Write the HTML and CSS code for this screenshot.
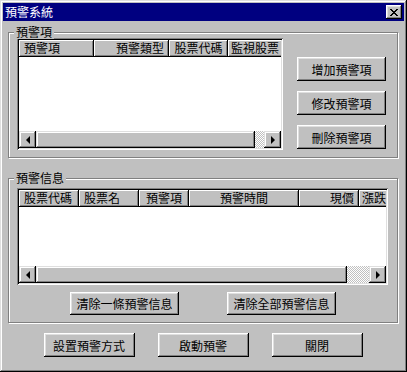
FILE: index.html
```html
<!DOCTYPE html>
<html lang="zh-Hant">
<head>
    <meta charset="UTF-8">
    <title>預警系統</title>
    <link rel="stylesheet" href="styles.css">
</head>
<body>
    <div class="window">
        <div class="titlebar">
            <span class="title">預警系統</span>
            <button class="close">
                <svg width="8" height="7" viewBox="0 0 8 7"><path d="M0 0h2v1h1v1h2V1h1V0h2v1H7v1H6v1H5v1h1v1h1v1h1v1H6V6H5V5H3v1H2v1H0V6h1V5h1V4h1V3H2V2H1V1H0z" fill="#000"/></svg>
            </button>
        </div>

        <div class="client">
            <div class="group group-items">
                <span class="group-title">預警項</span>
                <div class="listview lv-items">
                    <div class="lv-header">
                        <div class="col w75">預警項</div>
                        <div class="col w75 right">預警類型</div>
                        <div class="col w59 center">股票代碼</div>
                        <div class="col rest">監視股票</div>
                    </div>
                    <div class="lv-body"></div>
                    <div class="hscroll">
                        <div class="sb-btn"><span class="arrow-left"></span></div>
                        <div class="sb-thumb thumb-items"></div>
                        <div class="sb-track"></div>
                        <div class="sb-btn"><span class="arrow-right"></span></div>
                    </div>
                </div>
                <div class="side-buttons">
                    <button class="btn btn-side">增加預警項</button>
                    <button class="btn btn-side">修改預警項</button>
                    <button class="btn btn-side">刪除預警項</button>
                </div>
            </div>

            <div class="group group-alerts">
                <span class="group-title">預警信息</span>
                <div class="listview lv-alerts">
                    <div class="lv-header">
                        <div class="col w60">股票代碼</div>
                        <div class="col w60">股票名</div>
                        <div class="col w50 center">預警項</div>
                        <div class="col w110 center">預警時間</div>
                        <div class="col w60 right">現價</div>
                        <div class="col rest">漲跌</div>
                    </div>
                    <div class="lv-body"></div>
                    <div class="hscroll">
                        <div class="sb-btn"><span class="arrow-left"></span></div>
                        <div class="sb-thumb thumb-alerts"></div>
                        <div class="sb-track"></div>
                        <div class="sb-btn"><span class="arrow-right"></span></div>
                    </div>
                </div>
                <div class="alert-buttons">
                    <button class="btn btn-wide">清除一條預警信息</button>
                    <button class="btn btn-wide">清除全部預警信息</button>
                </div>
            </div>

            <div class="bottom-buttons">
                <button class="btn btn-bottom">設置預警方式</button>
                <button class="btn btn-bottom">啟動預警</button>
                <button class="btn btn-bottom">關閉</button>
            </div>
        </div>
    </div>
</body>
</html>
```

FILE: styles.css
```css
body {
    margin: 0;
    padding: 0;
    background-color: #c0c0c0;
    font-family: "Noto Sans CJK TC", "Noto Sans CJK SC", sans-serif;
    font-size: 12px;
    color: #000;
}

.window {
    width: 407px;
    height: 372px;
    box-sizing: border-box;
    padding: 3px;
    background-color: #c0c0c0;
    box-shadow: inset -1px -1px #000, inset 1px 1px #dfdfdf, inset -2px -2px #808080, inset 2px 2px #fff;
}

.titlebar {
    height: 18px;
    background-color: #000080;
    color: #fff;
    display: flex;
    align-items: center;
    justify-content: space-between;
    padding: 0 2px;
}

.title {
    font-size: 12px;
    line-height: 14px;
}

.close {
    width: 16px;
    height: 14px;
    border: none;
    padding: 0;
    background-color: #c0c0c0;
    display: flex;
    align-items: center;
    justify-content: center;
    box-shadow: inset -1px -1px #000, inset 1px 1px #fff, inset -2px -2px #808080, inset 2px 2px #dfdfdf;
}

.client {
    padding: 0 6px 0 5px;
}

.group {
    position: relative;
    box-sizing: border-box;
    border: 1px solid #808080;
    box-shadow: inset 1px 1px #fff, 1px 1px #fff;
}

.group-title {
    position: absolute;
    top: -8px;
    left: 5px;
    padding: 0 2px;
    line-height: 14px;
    background-color: #c0c0c0;
}

.group-items {
    margin-top: 11px;
    height: 126px;
    padding: 5px 0 0 8px;
    display: flex;
    gap: 14px;
}

.group-alerts {
    margin-top: 20px;
    height: 145px;
    padding-top: 9px;
}

/* list views */
.listview {
    box-sizing: border-box;
    padding: 2px;
    background-color: #fff;
    display: flex;
    flex-direction: column;
    overflow: hidden;
    box-shadow: inset 1px 1px #808080, inset -1px -1px #fff, inset 2px 2px #000, inset -2px -2px #dfdfdf;
}

.lv-items {
    width: 266px;
    height: 112px;
}

.lv-alerts {
    width: 371px;
    height: 97px;
    margin-left: 8px;
}

.lv-header {
    display: flex;
    height: 17px;
    flex-shrink: 0;
    overflow: hidden;
    background-color: #c0c0c0;
}

.col {
    box-sizing: border-box;
    flex-shrink: 0;
    height: 17px;
    line-height: 16px;
    padding: 0 5px;
    white-space: nowrap;
    overflow: hidden;
    box-shadow: inset -1px -1px #000, inset 1px 1px #fff, inset -2px -2px #808080;
}

.col.right { text-align: right; }
.col.center { text-align: center; padding: 0; }
.col.rest { flex: 1; padding: 0 3px; box-shadow: inset 0 -1px #000, inset 1px 1px #fff, inset 0 -2px #808080; }

.w50 { width: 50px; }
.w59 { width: 59px; }
.w60 { width: 60px; }
.w75 { width: 75px; }
.w110 { width: 110px; }

.lv-body {
    flex: 1;
}

/* scroll bar */
.hscroll {
    display: flex;
    height: 17px;
    flex-shrink: 0;
}

.sb-btn,
.sb-thumb {
    box-sizing: border-box;
    background-color: #c0c0c0;
    box-shadow: inset -1px -1px #000, inset 1px 1px #dfdfdf, inset -2px -2px #808080, inset 2px 2px #fff;
}

.sb-btn {
    width: 17px;
    display: flex;
    align-items: center;
    justify-content: center;
}

.thumb-items { width: 219px; }
.thumb-alerts { width: 311px; }

.sb-track {
    flex: 1;
    background: repeating-conic-gradient(#c0c0c0 0 25%, #fff 0 50%) 0 0 / 2px 2px;
}

.arrow-left {
    width: 0;
    height: 0;
    border-top: 4px solid transparent;
    border-bottom: 4px solid transparent;
    border-right: 4px solid #000;
}

.arrow-right {
    width: 0;
    height: 0;
    margin-left: 1px;
    border-top: 4px solid transparent;
    border-bottom: 4px solid transparent;
    border-left: 4px solid #000;
}

/* buttons */
.btn {
    box-sizing: border-box;
    border: none;
    padding: 0;
    background-color: #c0c0c0;
    font-family: inherit;
    font-size: 12px;
    color: #000;
    box-shadow: inset -1px -1px #000, inset 1px 1px #fff, inset -2px -2px #808080, inset 2px 2px #dfdfdf;
}

.side-buttons {
    display: flex;
    flex-direction: column;
    gap: 10px;
    padding-top: 19px;
}

.btn-side {
    width: 89px;
    height: 24px;
}

.alert-buttons {
    display: flex;
    justify-content: center;
    gap: 48px;
    margin-top: 7px;
}

.btn-wide {
    width: 109px;
    height: 23px;
}

.bottom-buttons {
    display: flex;
    justify-content: center;
    gap: 23px;
    margin-top: 10px;
}

.btn-bottom {
    width: 91px;
    height: 24px;
}
```
